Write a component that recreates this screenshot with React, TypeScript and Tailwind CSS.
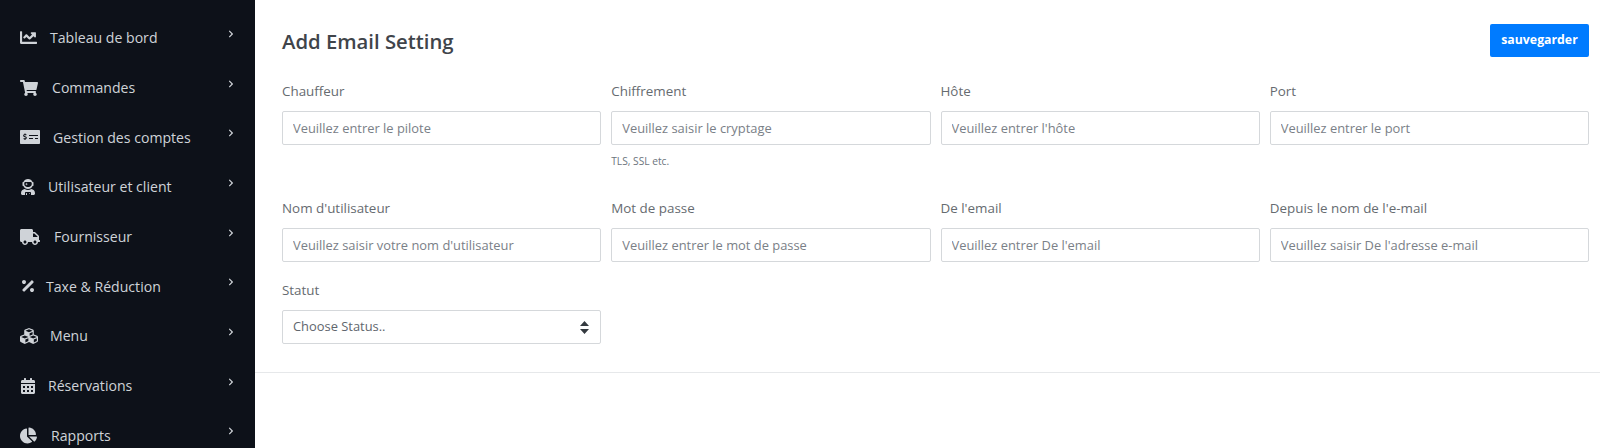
import {
  FaChartLine,
  FaShoppingCart,
  FaMoneyCheckAlt,
  FaUserAstronaut,
  FaTruck,
  FaPercentage,
  FaCubes,
  FaCalendarAlt,
  FaChartPie,
  FaChevronRight,
} from "react-icons/fa";

const menu = [
  { label: "Tableau de bord", icon: FaChartLine, size: "text-[17px]", gap: "ml-[13px]" },
  { label: "Commandes", icon: FaShoppingCart, size: "text-[18px]", gap: "ml-[14px]" },
  { label: "Gestion des comptes", icon: FaMoneyCheckAlt, size: "text-[20px]", gap: "ml-[13px]" },
  { label: "Utilisateur et client", icon: FaUserAstronaut, size: "text-[16px]", gap: "ml-[12px]" },
  { label: "Fournisseur", icon: FaTruck, size: "text-[20px]", gap: "ml-[14px]" },
  { label: "Taxe & Réduction", icon: FaPercentage, size: "text-[16px]", gap: "ml-[10px]" },
  { label: "Menu", icon: FaCubes, size: "text-[18px]", gap: "ml-[12px]" },
  { label: "Réservations", icon: FaCalendarAlt, size: "text-[16px]", gap: "ml-[12px]" },
  { label: "Rapports", icon: FaChartPie, size: "text-[17px]", gap: "ml-[14px]" },
];

const row1 = [
  { label: "Chauffeur", placeholder: "Veuillez entrer le pilote" },
  { label: "Chiffrement", placeholder: "Veuillez saisir le cryptage", help: "TLS, SSL etc." },
  { label: "Hôte", placeholder: "Veuillez entrer l'hôte" },
  { label: "Port", placeholder: "Veuillez entrer le port" },
];

const row2 = [
  { label: "Nom d'utilisateur", placeholder: "Veuillez saisir votre nom d'utilisateur" },
  { label: "Mot de passe", placeholder: "Veuillez entrer le mot de passe" },
  { label: "De l'email", placeholder: "Veuillez entrer De l'email" },
  { label: "Depuis le nom de l'e-mail", placeholder: "Veuillez saisir De l'adresse e-mail" },
];

function Field({ label, placeholder, help }: { label: string; placeholder: string; help?: string }) {
  return (
    <div>
      <label className="block text-[13.4px] leading-[21px] text-[#666b70] mt-[1px] mb-[9px]">{label}</label>
      <input
        readOnly
        placeholder={placeholder}
        className="block w-full h-[34px] px-[10px] text-[12.9px] bg-white border border-[#d5d8db] rounded-[2px] outline-none placeholder:text-[#7a8087]"
      />
      {help && <div className="mt-[9px] text-[10.2px] leading-[14px] text-[#6c757d]">{help}</div>}
    </div>
  );
}

export default function App() {
  return (
    <div className="flex h-screen overflow-hidden bg-white font-['Open_Sans',sans-serif]">
      <aside className="w-[255px] shrink-0 bg-[#0d1119] pt-[13px] pl-[20px] pr-[20px] overflow-hidden">
        {menu.map((item) => {
          const Icon = item.icon;
          return (
            <div key={item.label} className="flex items-center h-[49.7px] text-[#cfd3d8]">
              <Icon className={item.size} />
              <span className={`${item.gap} text-[14.1px] flex-1`}>{item.label}</span>
              <FaChevronRight className="text-[8px] mb-[8px]" />
            </div>
          );
        })}
      </aside>
      <main className="flex-1 min-w-0">
        <div className="px-[27px] pt-[24px] pr-[11px] pb-[28px] border-b border-[#e6e8ea]">
          <div className="flex items-center justify-between mb-[23px]">
            <h1 className="text-[20.3px] font-semibold mt-[2px] text-[#40444a]">Add Email Setting</h1>
            <button className="w-[99px] h-[33px] bg-[#007bff] rounded-[2px] text-white text-[12.3px] font-bold">
              sauvegarder
            </button>
          </div>
          <div className="grid grid-cols-4 gap-x-[10px]">
            {row1.map((f) => (
              <Field key={f.label} {...f} />
            ))}
          </div>
          <div className="grid grid-cols-4 gap-x-[10px] mt-[29px]">
            {row2.map((f) => (
              <Field key={f.label} {...f} />
            ))}
          </div>
          <div className="grid grid-cols-4 gap-x-[10px] mt-[17px]">
            <div>
              <label className="block text-[13.4px] leading-[21px] text-[#666b70] mt-[1px] mb-[9px]">Statut</label>
              <div className="flex items-center justify-between h-[34px] px-[10px] pr-[11px] text-[12.9px] text-[#5f666d] border border-[#d5d8db] rounded-[2px]">
                <span>Choose Status..</span>
                <svg width="9" height="13" viewBox="0 0 9 13" fill="#343a40">
                  <path d="M4.5 0 9 5H0zM4.5 13 0 8h9z" />
                </svg>
              </div>
            </div>
          </div>
        </div>
      </main>
    </div>
  );
}
